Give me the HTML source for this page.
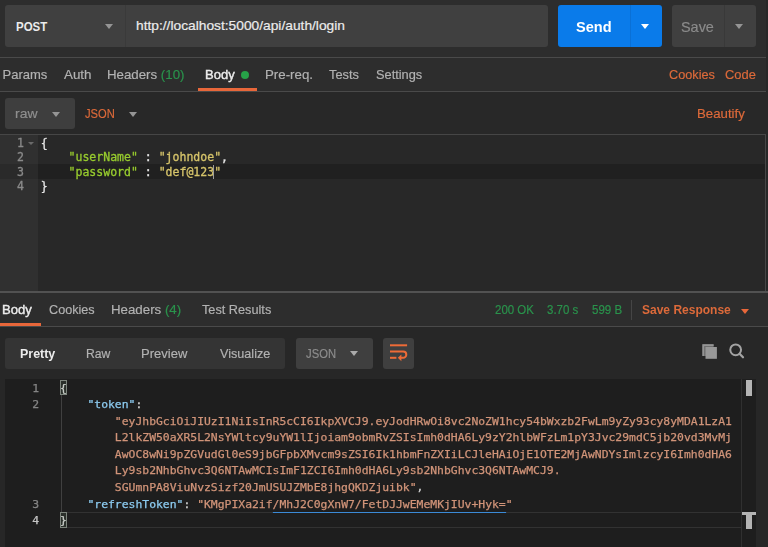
<!DOCTYPE html>
<html lang="en">
<head>
<meta charset="utf-8">
<title>Postman - login</title>
<style>
html,body{margin:0;padding:0;}
body{width:768px;height:547px;overflow:hidden;background:#2d2d2d;position:relative;filter:blur(0.45px);
  font-family:"Liberation Sans",sans-serif;color:#a6a6a6;}
.abs{position:absolute;}
.t{position:absolute;white-space:pre;line-height:1;transform-origin:0 0;-webkit-text-stroke:0.18px currentColor;}
.t.b{-webkit-text-stroke:0;}
.ui{font-size:13px;color:#b2b2b2;}
.or{color:#dd6a3a;}
.gr{color:#2a934c;}
.wh{color:#ececec;}
.sb{-webkit-text-stroke:0.4px currentColor;}
.b{font-weight:bold;}
.hl{position:absolute;height:1px;background:#4a4a4a;}
.mono{font-family:"DejaVu Sans Mono","Liberation Mono",monospace;-webkit-text-stroke:0.3px currentColor;}
.tri{position:absolute;width:0;height:0;border-left:4px solid transparent;border-right:4px solid transparent;border-top:5px solid #959595;}
/* request editor */
#req{position:absolute;left:0;top:134px;width:765.5px;height:156.5px;background:#282828;border-top:1px solid #464646;border-right:1px solid #464646;box-sizing:border-box;}
#req .gut{position:absolute;left:0;top:0;width:37.5px;height:100%;background:#303030;}
#req .act{position:absolute;left:0;top:29.2px;width:100%;height:14.5px;background:#202020;}
#req .gact{position:absolute;left:0;top:29.2px;width:37.5px;height:14.5px;background:#2a2a2a;}
.rl{position:absolute;left:0;height:14.5px;line-height:14.5px;font-size:11.53px;white-space:pre;}
.rl .n{position:absolute;left:0;width:24px;text-align:right;color:#8a8a8a;}
.rl .c{position:absolute;left:40.8px;color:#e6e6e6;}
.k{color:#98cc2e;}
.s{color:#d6c46a;}
/* response editor */
#res{position:absolute;left:5px;top:379px;width:750.5px;height:168px;background:#1e1e1e;overflow:hidden;}
.ll{position:absolute;left:0;height:16.57px;line-height:16.57px;font-size:10.6px;white-space:pre;-webkit-text-stroke:0.25px currentColor;}
.ll .n{position:absolute;left:0;width:34px;text-align:right;color:#858585;transform:scaleX(1.075);transform-origin:100% 0;}
.ll .c{position:absolute;left:54.9px;color:#d4d4d4;transform:scaleX(1.075);transform-origin:0 0;}
.ll .jk{color:#8ccbf0;}
.ll .js{color:#d19479;}
</style>
</head>
<body>

<div class="abs" style="left:766px;top:0;width:2px;height:292px;background:#282828;"></div>
<!-- ===== URL bar ===== -->
<div class="abs" style="left:5px;top:5px;width:543px;height:42px;background:#404040;border-radius:3px;"></div>
<div class="abs" style="left:125px;top:5px;width:1px;height:42px;background:#3a3a3a;"></div>
<span class="t b wh" id="post" style="left:15.84px;top:20px;font-size:13px;transform:scaleX(0.884);">POST</span>
<div class="tri" style="left:105px;top:24px;"></div>
<span class="t wh" id="url" style="left:135.61px;top:19px;font-size:13px;transform:scaleX(1.059);">http://localhost:5000/api/auth/login</span>

<!-- Send -->
<div class="abs" style="left:558px;top:5px;width:104px;height:42px;background:#0a7bea;border-radius:3px;"></div>
<div class="abs" style="left:629.5px;top:5px;width:1px;height:42px;background:#0a70d6;"></div>
<span class="t b" id="send" style="left:575.7px;top:19px;font-size:15px;color:#fff;transform:scaleX(0.972);">Send</span>
<div class="tri" style="left:641px;top:24px;border-top-color:#fff;"></div>
<!-- Save -->
<div class="abs" style="left:672px;top:5px;width:83.5px;height:42px;background:#404040;border-radius:3px;"></div>
<div class="abs" style="left:723.5px;top:5px;width:1px;height:42px;background:#393939;"></div>
<span class="t" id="save" style="left:680.78px;top:19px;font-size:15px;color:#8b8b8b;transform:scaleX(0.962);">Save</span>
<div class="tri" style="left:735px;top:24px;"></div>

<div class="hl" style="left:0;top:57px;width:766px;"></div>

<!-- ===== request tabs ===== -->
<span class="t ui" id="params" style="left:2.50px;top:68px;transform:scaleX(1.000);">Params</span>
<span class="t ui" id="auth" style="left:64.00px;top:68px;transform:scaleX(1.029);">Auth</span>
<span class="t ui" id="headers" style="left:107.3px;top:68px;transform:scaleX(1.021);">Headers <span class="gr">(10)</span></span>
<span class="t ui wh sb" id="body1" style="left:205.09px;top:68px;transform:scaleX(1.000);">Body</span>
<div class="abs" style="left:240.5px;top:70.5px;width:8px;height:8px;border-radius:50%;background:#27a148;"></div>
<span class="t ui" id="prereq" style="left:264.98px;top:68px;transform:scaleX(1.022);">Pre-req.</span>
<span class="t ui" id="tests" style="left:329.25px;top:68px;transform:scaleX(0.984);">Tests</span>
<span class="t ui" id="settings" style="left:376.01px;top:68px;transform:scaleX(0.984);">Settings</span>
<span class="t ui or" id="cookies1" style="left:668.76px;top:68px;transform:scaleX(0.978);">Cookies</span>
<span class="t ui or" id="code" style="left:725.00px;top:68px;transform:scaleX(0.992);">Code</span>
<div class="abs" style="left:197.5px;top:88px;width:59.5px;height:3.5px;background:#e8673a;"></div>
<div class="hl" style="left:0;top:91px;width:766px;"></div>

<!-- ===== body type row ===== -->
<div class="abs" style="left:0;top:92px;width:768px;height:43px;background:#282828;"></div>
<div class="abs" style="left:5px;top:97.5px;width:70px;height:31px;background:#3e3e3e;border-radius:3px;"></div>
<span class="t ui" id="raw" style="left:15.20px;top:107px;color:#8f8f8f;transform:scaleX(1.074);">raw</span>
<div class="tri" style="left:52px;top:111.5px;"></div>
<span class="t ui or" id="json1" style="left:84.78px;top:107px;transform:scaleX(0.859);">JSON</span>
<div class="tri" style="left:129px;top:111.5px;"></div>
<span class="t ui or" id="beautify" style="left:696.99px;top:107px;transform:scaleX(1.017);">Beautify</span>

<!-- ===== request editor ===== -->
<div id="req" class="mono">
  <div class="gut"></div>
  <div class="act"></div><div class="gact"></div>
  <div class="rl" style="top:0.8px;"><span class="n">1</span><span class="c">{</span></div>
  <div class="rl" style="top:15.3px;"><span class="n">2</span><span class="c">    <span class="k">"userName"</span> : <span class="s">"johndoe"</span>,</span></div>
  <div class="rl" style="top:29.8px;"><span class="n">3</span><span class="c">    <span class="k">"password"</span> : <span class="s">"def@123"</span></span></div>
  <div class="rl" style="top:44.3px;"><span class="n">4</span><span class="c">}</span></div>
  <div class="abs" style="left:213.3px;top:29.5px;width:1px;height:14px;background:#9c9c9c;"></div>
  <div class="abs" style="left:28px;top:6.5px;width:0;height:0;border-left:3px solid transparent;border-right:3px solid transparent;border-top:3.5px solid #6a6a6a;"></div>
</div>
<div class="abs" style="left:0;top:291px;width:768px;height:36px;background:#2d2d2d;"></div>
<div class="hl" style="left:0;top:291.25px;width:768px;height:1.5px;background:#525252;"></div>

<!-- ===== response tabs ===== -->
<span class="t ui wh sb" id="body2" style="left:2.09px;top:302.5px;transform:scaleX(1.009);">Body</span>
<span class="t ui" id="cookies2" style="left:49.01px;top:302.5px;transform:scaleX(0.973);">Cookies</span>
<span class="t ui" id="headers2" style="left:110.97px;top:302.5px;transform:scaleX(1.022);">Headers <span class="gr">(4)</span></span>
<span class="t ui" id="testres" style="left:202.25px;top:302.5px;transform:scaleX(0.978);">Test Results</span>
<span class="t ui gr" id="st200" style="left:495.32px;top:303.6px;font-size:12px;transform:scaleX(0.956);">200 OK</span>
<span class="t ui gr" id="st370" style="left:547.42px;top:303.6px;font-size:12px;transform:scaleX(0.956);">3.70 s</span>
<span class="t ui gr" id="st599" style="left:591.92px;top:303.6px;font-size:12px;transform:scaleX(0.961);">599 B</span>
<div class="abs" style="left:631px;top:299.5px;width:1px;height:20px;background:#454545;"></div>
<span class="t ui or b" id="saveresp" style="left:641.77px;top:302.5px;transform:scaleX(0.924);">Save Response</span>
<div class="tri" style="left:741.2px;top:308.7px;border-top-color:#e8673a;"></div>
<div class="abs" style="left:0;top:322.5px;width:40.5px;height:3.5px;background:#e8673a;"></div>
<div class="hl" style="left:0;top:326px;width:768px;"></div>

<!-- ===== response toolbar ===== -->
<div class="abs" style="left:0;top:327px;width:768px;height:220px;background:#272727;"></div>
<div class="abs" style="left:5px;top:337.5px;width:280px;height:31px;background:#343434;border-radius:3px;"></div>
<span class="t ui wh b" id="pretty" style="left:19.78px;top:347.3px;transform:scaleX(0.958);">Pretty</span>
<span class="t ui" id="rawr" style="left:86.1px;top:347.3px;transform:scaleX(0.935);">Raw</span>
<span class="t ui" id="preview" style="left:141.49px;top:347.3px;transform:scaleX(1.001);">Preview</span>
<span class="t ui" id="visualize" style="left:219.50px;top:347.3px;transform:scaleX(0.971);">Visualize</span>
<div class="abs" style="left:295.5px;top:337.5px;width:77px;height:31px;background:#3f3f3f;border-radius:3px;"></div>
<span class="t ui" id="json2" style="left:306.03px;top:347.3px;color:#8d8d8d;transform:scaleX(0.866);">JSON</span>
<div class="tri" style="left:350px;top:350.6px;border-top-color:#ababab;"></div>
<div class="abs" style="left:383px;top:337.5px;width:31.2px;height:31px;background:#3f3f3f;border-radius:3px;"></div>
<svg class="abs" style="left:383px;top:337.1px;" width="31" height="31" viewBox="0 0 31 31">
  <g fill="none" stroke="#ee6b37" stroke-width="2" stroke-linecap="butt">
    <path d="M7 8.3 H24.1"/>
    <path d="M7 14.6 H20.2 a3.1 3.1 0 0 1 0 6.2 H17.5"/>
    <path d="M7 20.8 H13.4"/>
  </g>
  <path d="M14.8 20.8 L18.4 17.4 V24.2 Z" fill="#ee6b37"/>
</svg>
<!-- copy icon -->
<svg class="abs" style="left:702px;top:343.5px;" width="16" height="16" viewBox="0 0 16 16">
  <rect x="0.4" y="0.3" width="11.2" height="11.7" fill="#6e6e6e"/>
  <path d="M0.4 0.3 H11.6 V2 H2.1 V12 H0.4 Z" fill="#949494"/>
  <rect x="3.5" y="3" width="11.4" height="11.8" fill="#989898"/>
</svg>
<!-- search icon -->
<svg class="abs" style="left:728px;top:343px;" width="17" height="17" viewBox="0 0 17 17">
  <circle cx="7.65" cy="6.8" r="5.4" fill="none" stroke="#a3a3a3" stroke-width="2"/>
  <path d="M11.8 10.9 L15 14.3" stroke="#a3a3a3" stroke-width="2.2" stroke-linecap="round"/>
</svg>

<!-- ===== response editor ===== -->
<div id="res" class="mono">
  <div class="abs" style="left:55.8px;top:16px;width:1px;height:118px;background:#404040;"></div>
  <div class="abs" style="left:56px;top:133px;width:680px;height:16px;border-top:1px solid #323232;border-bottom:1px solid #323232;box-sizing:border-box;"></div>
  <div class="ll" style="top:0.55px;"><span class="n">1</span><span class="c">{</span></div>
  <div class="ll" style="top:17.12px;"><span class="n">2</span><span class="c">    <span class="jk">"token"</span>:</span></div>
  <div class="ll" style="top:33.69px;"><span class="c js">        "eyJhbGciOiJIUzI1NiIsInR5cCI6IkpXVCJ9.eyJodHRwOi8vc2NoZW1hcy54bWxzb2FwLm9yZy93cy8yMDA1LzA1</span></div>
  <div class="ll" style="top:50.26px;"><span class="c js">        L2lkZW50aXR5L2NsYWltcy9uYW1lIjoiam9obmRvZSIsImh0dHA6Ly9zY2hlbWFzLm1pY3Jvc29mdC5jb20vd3MvMj</span></div>
  <div class="ll" style="top:66.83px;"><span class="c js">        AwOC8wNi9pZGVudGl0eS9jbGFpbXMvcm9sZSI6Ik1hbmFnZXIiLCJleHAiOjE1OTE2MjAwNDYsImlzcyI6Imh0dHA6</span></div>
  <div class="ll" style="top:83.40px;"><span class="c js">        Ly9sb2NhbGhvc3Q6NTAwMCIsImF1ZCI6Imh0dHA6Ly9sb2NhbGhvc3Q6NTAwMCJ9.</span></div>
  <div class="ll" style="top:99.97px;"><span class="c js">        SGUmnPA8ViuNvzSizf20JmUSUJZMbE8jhgQKDZjuibk"<span style="color:#d4d4d4">,</span></span></div>
  <div class="ll" style="top:116.54px;"><span class="n">3</span><span class="c">    <span class="jk">"refreshToken"</span>: <span class="js">"KMgPIXa2if<span style="border-bottom:1px solid #3b8ad6;padding-bottom:2px;">/MhJ2C0gXnW7/FetDJJwEMeMKjIUv+Hyk=</span>"</span></span></div>
  <div class="ll" style="top:133.11px;"><span class="n" style="color:#c6c6c6">4</span><span class="c">}</span></div>
  <!-- bracket match boxes -->
  <div class="abs" style="left:55.2px;top:0.5px;width:7px;height:15.5px;border:1px solid #7d857d;box-sizing:border-box;background:rgba(130,170,130,.12);"></div>
  <div class="abs" style="left:55.2px;top:133px;width:7px;height:16px;border:1px solid #7d857d;box-sizing:border-box;background:rgba(130,170,130,.12);"></div>
  <!-- overview ruler -->
  <div class="abs" style="left:736px;top:0;width:1px;height:168px;background:#303030;"></div>
  <div class="abs" style="left:741px;top:0.5px;width:5.5px;height:16px;background:#b4b4b4;"></div>
  <div class="abs" style="left:736.5px;top:132.5px;width:14px;height:3px;background:#b4b4b4;"></div>
  <div class="abs" style="left:741px;top:132.5px;width:5.5px;height:17px;background:#b4b4b4;"></div>
</div>

</body>
</html>
